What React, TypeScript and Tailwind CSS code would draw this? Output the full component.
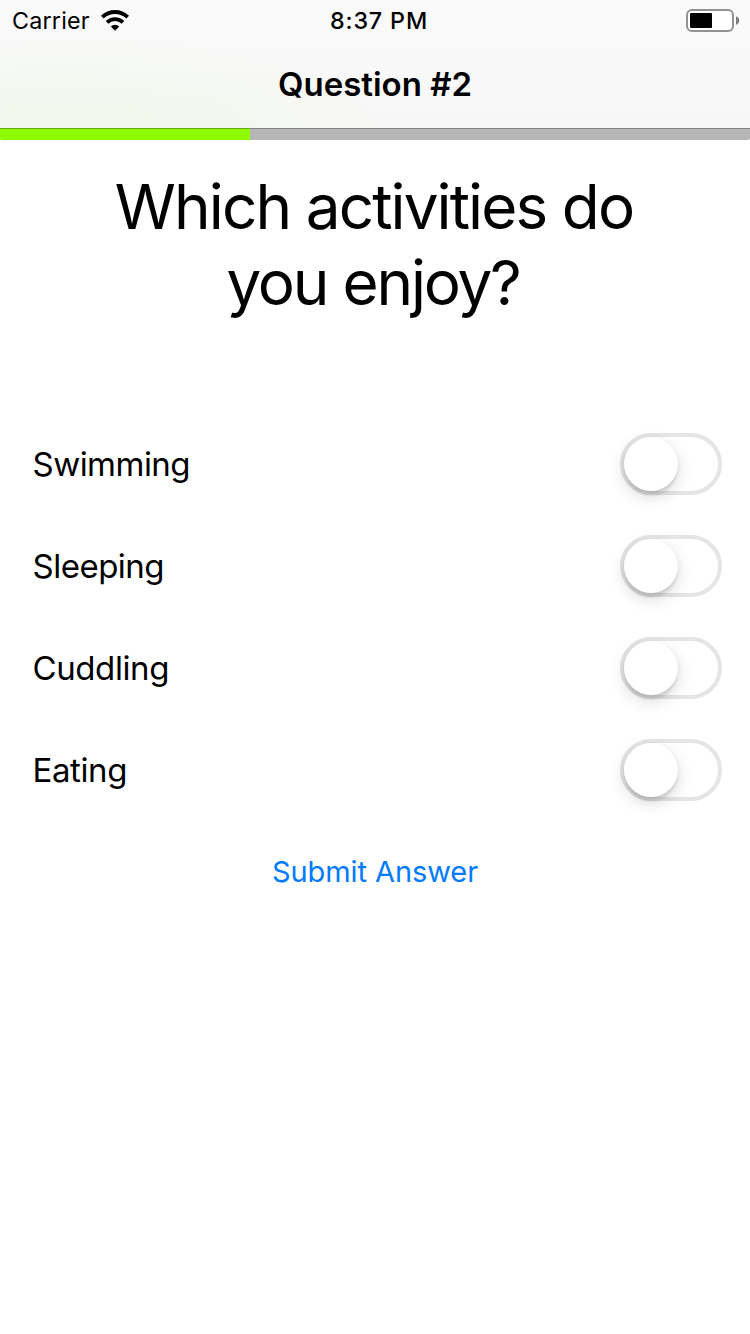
import React from "react";

const activities = [
  { name: "Swimming", tracking: "tracking-[-0.52px]" },
  { name: "Sleeping", tracking: "tracking-[-0.5px]" },
  { name: "Cuddling", tracking: "tracking-[-0.4px]" },
  { name: "Eating", tracking: "tracking-[-0.4px]" },
];

function WifiIcon() {
  return (
    <svg width="28" height="22" viewBox="0 0 28 22" fill="none" stroke="#000">
      <path d="M1.3 7.1 A18.4 18.4 0 0 1 26.7 7.1" strokeWidth="3.8" />
      <path d="M6 12.4 A11.4 11.4 0 0 1 22 12.4" strokeWidth="3.8" />
      <path d="M14 20.8 L9.8 16.6 A5.8 5.8 0 0 1 18.2 16.6 Z" fill="#000" stroke="none" />
    </svg>
  );
}

function BatteryIcon() {
  return (
    <svg width="54" height="24" viewBox="0 0 54 24">
      <rect x="1" y="2" width="46" height="21" rx="5" fill="#fff" stroke="#929292" strokeWidth="2" />
      <rect x="4" y="5" width="22" height="15" rx="1" fill="#000" />
      <path d="M50 8.2 A4.5 4.5 0 0 1 50 16.8 Z" fill="#7c7c7c" />
    </svg>
  );
}

function Toggle({ label }: { label: string }) {
  return (
    <button
      role="switch"
      aria-checked={false}
      aria-label={label}
      className="flex h-[62px] w-[102px] items-center rounded-full border-4 border-[#e5e5e5] bg-white"
    >
      <span className="size-[54px] rounded-full bg-white shadow-[0_6px_16px_rgba(0,0,0,0.15),0_6px_2px_-1px_rgba(0,0,0,0.05),0_2px_4px_rgba(0,0,0,0.08)]" />
    </button>
  );
}

export default function App() {
  return (
    <div className="flex min-h-[1334px] w-[750px] flex-col bg-white font-['Inter','Liberation_Sans',sans-serif] text-black">
      <header className="h-32 bg-[radial-gradient(ellipse_340px_100px_at_70px_132px,#f2f8ea,transparent),linear-gradient(#fafafa,#f7f7f7)]">
        <div className="grid h-10 grid-cols-3 items-center pr-[10px] pl-3 text-[23.3px] leading-[42px] whitespace-nowrap">
          <div className="flex h-10 items-center gap-3">
            <span className="w-[77px] leading-10 tracking-[0.2px]">Carrier</span>
            <WifiIcon />
          </div>
          <div className="pl-[6px] text-center font-medium tracking-[0.85px]">8:37 PM</div>
          <div className="flex h-10 items-center justify-end pb-0.5">
            <BatteryIcon />
          </div>
        </div>
        <h1 className="text-center text-[33px] leading-[88px] font-semibold">Question #2</h1>
      </header>
      <div className="flex h-3 overflow-hidden rounded-b-[2px] bg-[#b6b6b6]">
        <div className="h-3 w-1/3 border-t border-[#65ae10] bg-[#8efa00]" />
        <div className="h-3 flex-1 border-t border-[#828282]" />
      </div>
      <main className="flex flex-col items-stretch pt-[29px]">
        <h2 className="pr-[2px] text-center text-[62px] leading-[76px] tracking-[-1.9px]">
          Which activities do
          <br />
          <span className="pr-[2px] tracking-[-2.2px]">you enjoy?</span>
        </h2>
        <ul className="mt-28 flex flex-col gap-10 pr-7 pl-[32.5px]">
          {activities.map((a) => (
            <li key={a.name} className="flex h-[62px] items-center justify-between">
              <span className={`pt-0.5 text-[33px] ${a.tracking}`}>{a.name}</span>
              <Toggle label={a.name} />
            </li>
          ))}
        </ul>
        <button className="mt-[41px] self-center text-[29px] leading-[60px] tracking-[-0.08px] text-[#007aff]">
          Submit Answer
        </button>
      </main>
    </div>
  );
}
